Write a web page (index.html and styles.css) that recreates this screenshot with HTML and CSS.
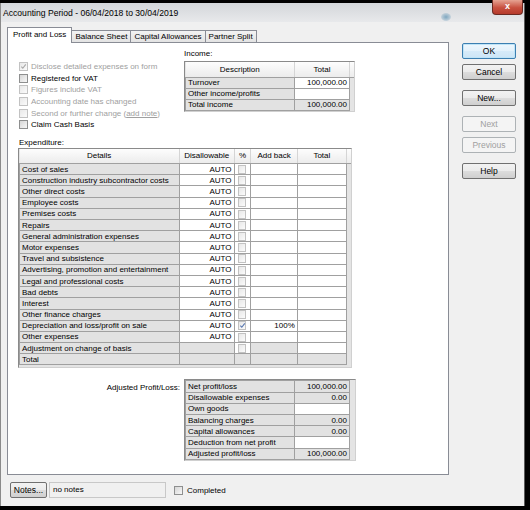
FILE: index.html
```html
<!DOCTYPE html>
<html lang="en">
<head>
    <meta charset="UTF-8">
    <title>Accounting Period</title>
    <link rel="stylesheet" href="styles.css">
</head>
<body>

<div class="window">
    <div class="titlebar">
        <span class="title">Accounting Period - 06/04/2018 to 30/04/2019</span>
        <span class="glow"></span>
        <span class="close">x</span>
    </div>

    <div class="client">
        <div class="main">
            <!-- Tabs -->
            <div class="tabs">
                <div class="tab active">Profit and Loss</div>
                <div class="tab">Balance Sheet</div>
                <div class="tab">Capital Allowances</div>
                <div class="tab">Partner Split</div>
            </div>

            <div class="panel">
                <div class="top">
                    <div class="checks">
                        <div class="check disabled"><span class="cb checked"><svg viewBox="0 0 8 8"><path d="M1.5 4.2 L3.2 6 L6.6 1.6" /></svg></span><span>Disclose detailed expenses on form</span></div>
                        <div class="check"><span class="cb"></span><span>Registered for VAT</span></div>
                        <div class="check disabled"><span class="cb"></span><span>Figures include VAT</span></div>
                        <div class="check disabled"><span class="cb"></span><span>Accounting date has changed</span></div>
                        <div class="check disabled"><span class="cb"></span><span>Second or further change (<u>add note</u>)</span></div>
                        <div class="check"><span class="cb"></span><span>Claim Cash Basis</span></div>
                    </div>

                    <div class="income">
                        <div class="label">Income:</div>
                        <div class="grid">
                            <table>
                                <colgroup><col class="w-desc"><col class="w-val"><col class="w-fill"></colgroup>
                                <tr class="head"><th>Description</th><th>Total</th><th class="fill"></th></tr>
                                <tr><td class="ro">Turnover</td><td class="num">100,000.00</td><td class="fill"></td></tr>
                                <tr><td class="ro">Other income/profits</td><td class="num"></td><td class="fill"></td></tr>
                                <tr><td class="ro">Total income</td><td class="num ro">100,000.00</td><td class="fill"></td></tr>
                            </table>
                        </div>
                    </div>
                </div>

                <div class="label exp-label">Expenditure:</div>
                <div class="grid exp">
                    <table>
                        <colgroup><col class="w-details"><col class="w-dis"><col class="w-pct"><col class="w-add"><col class="w-tot"><col class="w-fill"></colgroup>
                        <tr class="head"><th>Details</th><th>Disallowable</th><th>%</th><th>Add back</th><th>Total</th><th class="fill"></th></tr>
                        <tr><td class="ro">Cost of sales</td><td class="num">AUTO</td><td class="pct"><span class="cb small"></span></td><td></td><td></td><td class="fill"></td></tr>
                        <tr><td class="ro">Construction industry subcontractor costs</td><td class="num">AUTO</td><td class="pct"><span class="cb small"></span></td><td></td><td></td><td class="fill"></td></tr>
                        <tr><td class="ro">Other direct costs</td><td class="num">AUTO</td><td class="pct"><span class="cb small"></span></td><td></td><td></td><td class="fill"></td></tr>
                        <tr><td class="ro">Employee costs</td><td class="num">AUTO</td><td class="pct"><span class="cb small"></span></td><td></td><td></td><td class="fill"></td></tr>
                        <tr><td class="ro">Premises costs</td><td class="num">AUTO</td><td class="pct"><span class="cb small"></span></td><td></td><td></td><td class="fill"></td></tr>
                        <tr><td class="ro">Repairs</td><td class="num">AUTO</td><td class="pct"><span class="cb small"></span></td><td></td><td></td><td class="fill"></td></tr>
                        <tr><td class="ro">General administration expenses</td><td class="num">AUTO</td><td class="pct"><span class="cb small"></span></td><td></td><td></td><td class="fill"></td></tr>
                        <tr><td class="ro">Motor expenses</td><td class="num">AUTO</td><td class="pct"><span class="cb small"></span></td><td></td><td></td><td class="fill"></td></tr>
                        <tr><td class="ro">Travel and subsistence</td><td class="num">AUTO</td><td class="pct"><span class="cb small"></span></td><td></td><td></td><td class="fill"></td></tr>
                        <tr><td class="ro">Advertising, promotion and entertainment</td><td class="num">AUTO</td><td class="pct"><span class="cb small"></span></td><td></td><td></td><td class="fill"></td></tr>
                        <tr><td class="ro">Legal and professional costs</td><td class="num">AUTO</td><td class="pct"><span class="cb small"></span></td><td></td><td></td><td class="fill"></td></tr>
                        <tr><td class="ro">Bad debts</td><td class="num">AUTO</td><td class="pct"><span class="cb small"></span></td><td></td><td></td><td class="fill"></td></tr>
                        <tr><td class="ro">Interest</td><td class="num">AUTO</td><td class="pct"><span class="cb small"></span></td><td></td><td></td><td class="fill"></td></tr>
                        <tr><td class="ro">Other finance charges</td><td class="num">AUTO</td><td class="pct"><span class="cb small"></span></td><td></td><td></td><td class="fill"></td></tr>
                        <tr><td class="ro">Depreciation and loss/profit on sale</td><td class="num">AUTO</td><td class="pct"><span class="cb small checked"><svg viewBox="0 0 8 8"><path d="M1.5 4.2 L3.2 6 L6.6 1.6" /></svg></span></td><td class="num">100%</td><td></td><td class="fill"></td></tr>
                        <tr><td class="ro">Other expenses</td><td class="num">AUTO</td><td class="pct"><span class="cb small"></span></td><td></td><td></td><td class="fill"></td></tr>
                        <tr><td class="ro">Adjustment on change of basis</td><td class="ro"></td><td class="pct"><span class="cb small"></span></td><td class="ro"></td><td></td><td class="fill"></td></tr>
                        <tr><td class="ro">Total</td><td class="ro"></td><td class="ro"></td><td class="ro"></td><td class="ro"></td><td class="fill"></td></tr>
                    </table>
                </div>

                <div class="adjusted">
                    <div class="label adj-label">Adjusted Profit/Loss:</div>
                    <div class="grid">
                        <table>
                            <colgroup><col class="w-desc"><col class="w-val"><col class="w-fill"></colgroup>
                            <tr><td class="ro">Net profit/loss</td><td class="num ro">100,000.00</td><td class="fill"></td></tr>
                            <tr><td class="ro">Disallowable expenses</td><td class="num ro">0.00</td><td class="fill"></td></tr>
                            <tr><td class="ro">Own goods</td><td class="num"></td><td class="fill"></td></tr>
                            <tr><td class="ro">Balancing charges</td><td class="num ro">0.00</td><td class="fill"></td></tr>
                            <tr><td class="ro">Capital allowances</td><td class="num ro">0.00</td><td class="fill"></td></tr>
                            <tr><td class="ro">Deduction from net profit</td><td class="num"></td><td class="fill"></td></tr>
                            <tr><td class="ro">Adjusted profit/loss</td><td class="num ro">100,000.00</td><td class="fill"></td></tr>
                        </table>
                    </div>
                </div>
            </div>
        </div>

        <!-- Dialog buttons -->
        <div class="side">
            <button class="btn default">OK</button>
            <button class="btn">Cancel</button>
            <button class="btn sep">New...</button>
            <button class="btn sep" disabled>Next</button>
            <button class="btn" disabled>Previous</button>
            <button class="btn sep">Help</button>
        </div>
    </div>

    <div class="footer">
        <button class="btn notes">Notes...</button>
        <div class="notes-box">no notes</div>
        <div class="check completed"><span class="cb"></span><span>Completed</span></div>
    </div>
</div>

</body>
</html>
```

FILE: styles.css
```css
* {
    box-sizing: border-box;
}
body {
    margin: 0;
    background: #000;
    font-family: "Liberation Sans", Arial, sans-serif;
    font-size: 8px;
    color: #000;
}
.window {
    width: 525px;
    height: 503px;
    margin-top: 3px;
    background: #f0f0f0;
    border-left: 1px solid #8a8a8a;
    border-right: 1px solid #5c5c5c;
}
.titlebar {
    position: relative;
    height: 19px;
    padding-left: 2px;
    display: flex;
    align-items: center;
    background: linear-gradient(#d3d6da, #e8e9eb);
    font-size: 8.6px;
}
.glow {
    position: absolute;
    left: 440px;
    top: 10px;
    width: 10px;
    height: 8px;
    border-radius: 50%;
    background: radial-gradient(#7fa7c0, rgba(160, 190, 210, 0));
}
.close {
    position: absolute;
    right: 1px;
    top: -3px;
    width: 31px;
    height: 15px;
    border: 1px solid #6b2a22;
    border-top: none;
    border-radius: 0 0 4px 4px;
    background: linear-gradient(#e6a392, #c8503f 55%, #b53b2c);
    color: #fff;
    font-size: 9px;
    font-weight: bold;
    text-align: center;
    line-height: 12px;
}
.client {
    display: flex;
    padding: 5px 0 0 6px;
}
.main {
    width: 442px;
}
/* Tabs */
.tabs {
    display: flex;
    align-items: flex-end;
    height: 15px;
}
.tab {
    height: 12px;
    padding: 0 3px;
    margin-right: -1px;
    border: 1px solid #898c95;
    border-bottom: none;
    background: linear-gradient(#f3f3f3, #e3e3e3);
    line-height: 11px;
}
.tab.active {
    position: relative;
    z-index: 1;
    height: 16px;
    margin-bottom: -1px;
    padding: 0 5px;
    background: #fff;
    line-height: 13px;
}
.panel {
    height: 433px;
    padding: 5px 0 0 11px;
    border: 1px solid #898c95;
    background: #fff;
}
.top {
    display: flex;
}
.checks {
    width: 165px;
    padding-top: 13px;
}
.check {
    display: flex;
    align-items: center;
    gap: 3px;
    height: 11.6px;
    white-space: nowrap;
}
.check.disabled {
    color: #a0a0a0;
}
.cb {
    display: inline-block;
    width: 9px;
    height: 9px;
    border: 1px solid #8e8f8f;
    background: linear-gradient(135deg, #d6d6d6, #f7f7f7);
}
.disabled .cb,
.cb.small {
    border-color: #c2c2c2;
    background: linear-gradient(135deg, #e8e8e8, #fbfbfb);
}
.cb svg {
    display: block;
    width: 7px;
    height: 7px;
    fill: none;
    stroke: #a8a8a8;
    stroke-width: 1.3;
}
.cb.small svg {
    stroke: #5a78b0;
}
.label {
    height: 11px;
    line-height: 11px;
}
.income .label {
    margin-bottom: 2px;
}
.exp-label {
    margin-top: 6px;
}
/* Grid controls */
.grid {
    background: #e4e4e4;
    border: 1px solid;
    border-color: #8a8a8a #d0d0d0 #d0d0d0 #8a8a8a;
}
.grid table {
    border-collapse: collapse;
    table-layout: fixed;
}
.grid td {
    height: 11.2px;
    padding: 0 2px;
    border: 1px solid #a0a0a0;
    background: #fff;
    white-space: nowrap;
    overflow: hidden;
    line-height: 9px;
}
.grid th {
    height: 15px;
    padding: 0;
    border-right: 1px solid #d5d5d5;
    border-bottom: 1px solid #a0a0a0;
    background: linear-gradient(#fdfdfd, #ececec);
    font-weight: normal;
}
.grid th.fill {
    border-right: none;
}
.grid td.ro {
    background: #e2e2e2;
}
.grid td.num {
    text-align: right;
}
.grid td.pct {
    text-align: center;
    padding: 0;
}
.grid td.pct .cb {
    width: 8px;
    height: 9px;
    vertical-align: middle;
}
.grid td.fill {
    border: none;
    background: transparent;
}
.w-desc { width: 109px; }
.w-val { width: 55px; }
.w-fill { width: 3px; }
.w-details { width: 160px; }
.w-dis { width: 55px; }
.w-pct { width: 17px; }
.w-add { width: 47px; }
.w-tot { width: 50px; }
.grid.exp {
    width: 334px;
    margin-left: -1px;
    padding-bottom: 2px;
}
.adjusted {
    display: flex;
    margin-top: 11px;
}
.adj-label {
    width: 165px;
    padding: 3px 4px 0 0;
    text-align: right;
}
/* Buttons */
.side {
    display: flex;
    flex-direction: column;
    gap: 5px;
    padding: 16px 0 0 13px;
}
.btn {
    width: 54px;
    height: 16px;
    padding: 0;
    border: 1px solid #707070;
    border-radius: 2px;
    background: linear-gradient(#f2f2f2, #ebebeb 50%, #dddddd 50%, #cfcfcf);
    font-family: inherit;
    font-size: 8.5px;
    color: #000;
}
.btn.default {
    border-color: #3c7fb1;
    box-shadow: inset 0 0 0 1px #bfe4f7;
    background: linear-gradient(#eef7fd, #e3f1fb 50%, #d6ebf9 50%, #cde5f6);
}
.btn.sep {
    margin-top: 5px;
}
.btn:disabled {
    border-color: #adb2b5;
    background: #f4f4f4;
    color: #a0a0a0;
}
.footer {
    display: flex;
    align-items: center;
    padding: 7px 0 0 9px;
}
.btn.notes {
    width: 37px;
}
.notes-box {
    width: 117px;
    height: 16px;
    margin-left: 2px;
    padding-left: 3px;
    border: 1px solid #c8c8c8;
    line-height: 14px;
}
.check.completed {
    margin-left: 8px;
    gap: 4px;
}
```
